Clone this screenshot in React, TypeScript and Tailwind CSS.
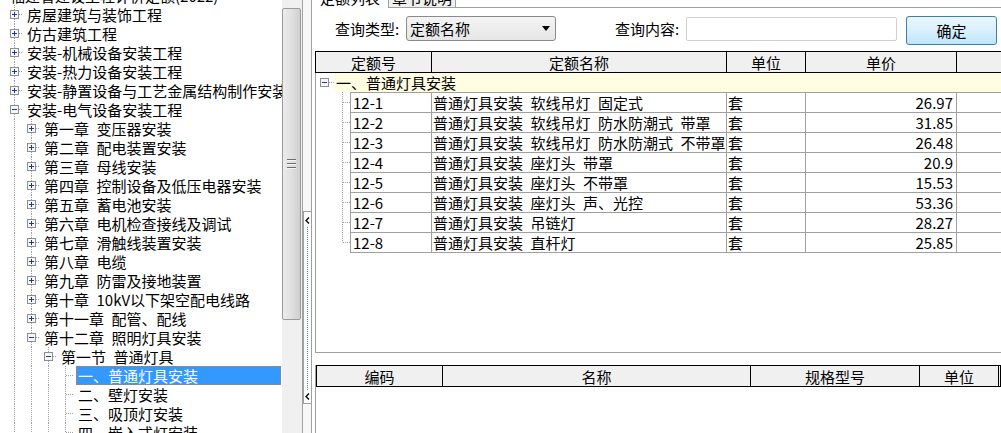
import React from "react";

// Tree node of the quota catalogue on the left
interface TreeNode {
  level: number;
  text: string;
  box?: "plus" | "minus";
  selected?: boolean;
}

interface QuotaRow {
  code: string;
  name: string;
  unit: string;
  price: string;
}

const SP = "\u2002";

const treeNodes: TreeNode[] = [
  { level: -1, text: "福建省建设工程计价定额(2022)", box: "minus" },
  { level: 0, text: "房屋建筑与装饰工程", box: "plus" },
  { level: 0, text: "仿古建筑工程", box: "plus" },
  { level: 0, text: "安装-机械设备安装工程", box: "plus" },
  { level: 0, text: "安装-热力设备安装工程", box: "plus" },
  { level: 0, text: "安装-静置设备与工艺金属结构制作安装工程", box: "plus" },
  { level: 0, text: "安装-电气设备安装工程", box: "minus" },
  { level: 1, text: `第一章${SP}变压器安装`, box: "plus" },
  { level: 1, text: `第二章${SP}配电装置安装`, box: "plus" },
  { level: 1, text: `第三章${SP}母线安装`, box: "plus" },
  { level: 1, text: `第四章${SP}控制设备及低压电器安装`, box: "plus" },
  { level: 1, text: `第五章${SP}蓄电池安装`, box: "plus" },
  { level: 1, text: `第六章${SP}电机检查接线及调试`, box: "plus" },
  { level: 1, text: `第七章${SP}滑触线装置安装`, box: "plus" },
  { level: 1, text: `第八章${SP}电缆`, box: "plus" },
  { level: 1, text: `第九章${SP}防雷及接地装置`, box: "plus" },
  { level: 1, text: `第十章${SP}10kV以下架空配电线路`, box: "plus" },
  { level: 1, text: `第十一章${SP}配管、配线`, box: "plus" },
  { level: 1, text: `第十二章${SP}照明灯具安装`, box: "minus" },
  { level: 2, text: `第一节${SP}普通灯具`, box: "minus" },
  { level: 3, text: "一、普通灯具安装", selected: true },
  { level: 3, text: "二、壁灯安装" },
  { level: 3, text: "三、吸顶灯安装" },
  { level: 3, text: "四、嵌入式灯安装" },
];

const quotaRows: QuotaRow[] = [
  { code: "12-1", name: `普通灯具安装${SP}软线吊灯${SP}固定式`, unit: "套", price: "26.97" },
  { code: "12-2", name: `普通灯具安装${SP}软线吊灯${SP}防水防潮式${SP}带罩`, unit: "套", price: "31.85" },
  { code: "12-3", name: `普通灯具安装${SP}软线吊灯${SP}防水防潮式${SP}不带罩`, unit: "套", price: "26.48" },
  { code: "12-4", name: `普通灯具安装${SP}座灯头${SP}带罩`, unit: "套", price: "20.9" },
  { code: "12-5", name: `普通灯具安装${SP}座灯头${SP}不带罩`, unit: "套", price: "15.53" },
  { code: "12-6", name: `普通灯具安装${SP}座灯头${SP}声、光控`, unit: "套", price: "53.36" },
  { code: "12-7", name: `普通灯具安装${SP}吊链灯`, unit: "套", price: "28.27" },
  { code: "12-8", name: `普通灯具安装${SP}直杆灯`, unit: "套", price: "25.85" },
];

const DOT = "#a0a0a0";

// small +/- expander box, drawn centred on (cx, cy)
function ExpanderBox({ kind, cx, cy }: { kind: "plus" | "minus"; cx: number; cy: number }) {
  return (
    <g>
      <rect x={cx - 4} y={cy - 4} width="8" height="8" fill="#f6f6f6" stroke="#8e8f8f" />
      <line x1={cx - 2.5} y1={cy} x2={cx + 2.5} y2={cy} stroke="#1d3a8c" />
      {kind === "plus" && <line x1={cx} y1={cy - 2.5} x2={cx} y2={cy + 2.5} stroke="#1d3a8c" />}
    </g>
  );
}

// one 17px indent column of the tree with its dotted guide lines
function TreeGuide({ own, box, root }: { own?: boolean; box?: "plus" | "minus"; root?: boolean }) {
  return (
    <svg width="17" height="19" className="block shrink-0">
      {!root && <line x1="8.5" y1="0" x2="8.5" y2="19" stroke={DOT} strokeDasharray="1 1" />}
      {own && <line x1="9" y1="9.5" x2="17" y2="9.5" stroke={DOT} strokeDasharray="1 1" />}
      {box && <ExpanderBox kind={box} cx={8.5} cy={9.5} />}
    </svg>
  );
}

function TreeRow({ node }: { node: TreeNode }) {
  const guides = [];
  for (let l = 0; l < node.level; l++) guides.push(<TreeGuide key={l} />);
  const isRoot = node.level < 0;
  return (
    <div className={`flex h-[19px] items-center ${isRoot ? "-ml-[11px]" : "pl-[6px]"}`}>
      {guides}
      <TreeGuide own={!isRoot} box={node.box} root={isRoot} />
      {node.selected ? (
        <span className="ml-[2px] mr-[1px] flex h-[19px] flex-1 items-center whitespace-nowrap border border-dotted border-[#d4801e] bg-[#3399ff] px-[1px] text-white">
          {node.text}
        </span>
      ) : (
        <span className="ml-[2px] flex h-[19px] items-center whitespace-nowrap px-[2px]">{node.text}</span>
      )}
    </div>
  );
}

function Chevron() {
  return (
    <svg width="5" height="7" className="block shrink-0">
      <polyline points="4,0.5 1,3.5 4,6.5" fill="none" stroke="#000" strokeWidth="1.3" />
    </svg>
  );
}

function QuotaLine({ row, last }: { row: QuotaRow; last: boolean }) {
  const h = last ? 21 : 20;
  return (
    <div className={`flex ${last ? "h-[21px]" : "h-[20px]"}`}>
      <svg width="34" height={h} className="block shrink-0">
        <line x1="26.5" y1="0" x2="26.5" y2={last ? 10.5 : h} stroke={DOT} strokeDasharray="1 1" />
        <line x1="27" y1="10.5" x2="34" y2="10.5" stroke={DOT} strokeDasharray="1 1" />
      </svg>
      <div className={`flex flex-1 border-t border-[#a0a0a0] ${last ? "border-b" : ""}`}>
        <div className="flex w-[82px] shrink-0 items-center border-x border-[#a0a0a0] pl-[2px]">{row.code}</div>
        <div className="flex w-[295px] shrink-0 items-center overflow-hidden whitespace-nowrap border-r border-[#a0a0a0] pl-[1px]">
          {row.name}
        </div>
        <div className="flex w-[79px] shrink-0 items-center border-r border-[#a0a0a0] pl-[1px]">{row.unit}</div>
        <div className="flex w-[151px] shrink-0 items-center justify-end border-r border-[#a0a0a0] pr-[3px]">
          {row.price}
        </div>
        <div className="flex-1" />
      </div>
    </div>
  );
}

export default function App() {
  return (
    <div className="flex h-[433px] w-[1001px] overflow-hidden bg-white font-['Noto_Sans_CJK_SC','Noto_Sans',sans-serif] text-[15px] leading-none text-black">
      {/* left: catalogue tree with its scrollbar */}
      <div className="flex w-[303px] shrink-0 border-r border-[#a0a0a0]">
        <div className="w-[282px] shrink-0 overflow-hidden">
          <div className="-mt-[14px]">
            {treeNodes.map((n, i) => (
              <TreeRow key={i} node={n} />
            ))}
          </div>
        </div>
        <div className="w-[20px] shrink-0 bg-[#f0f0f0] pt-[8px]">
          <div className="flex h-[312px] w-[19px] flex-col items-center justify-center gap-[2px] rounded-[2px] border border-[#9a9a9a] bg-gradient-to-r from-[#ececec] via-[#e0e0e0] to-[#cfcfcf]">
            <div className="h-[2px] w-[9px] border-t border-b border-t-[#6e6e6e] border-b-[#f4f4f4]" />
            <div className="h-[2px] w-[9px] border-t border-b border-t-[#6e6e6e] border-b-[#f4f4f4]" />
            <div className="h-[2px] w-[9px] border-t border-b border-t-[#6e6e6e] border-b-[#f4f4f4]" />
          </div>
        </div>
      </div>

      {/* splitter */}
      <div className="w-[8px] shrink-0 bg-[#f7f7f7] pt-[211px]">
        <div className="flex h-[193px] flex-col items-center border-y border-l border-[#a0a0a0] bg-white pb-[3px] pt-[5px]">
          <Chevron />
          <div className="my-[3px] w-0 flex-1 border-l border-dotted border-[#3b8fe6]" />
          <Chevron />
        </div>
      </div>

      {/* right: quota list */}
      <div className="flex min-w-0 flex-1 flex-col border-l border-[#a0a0a0]">
        <div className="flex h-[8px] shrink-0 items-start overflow-hidden">
          <div className="-mt-[14px] flex h-[22px] w-[76px] shrink-0 items-center pl-[8px]">定额列表</div>
          <div className="-mt-[14px] flex h-[22px] w-[68px] shrink-0 items-center justify-center border border-[#a0a0a0] bg-[#f0f0f0]">
            章节说明
          </div>
          <div className="h-[8px] flex-1 border-b border-[#a0a0a0]" />
        </div>

        <div className="flex h-[43px] shrink-0 items-start pl-[23px]">
          <div className="mt-[8px] flex h-[25px] w-[68px] shrink-0 items-center whitespace-nowrap">查询类型:</div>
          <div className="ml-[3px] mt-[8px] flex h-[25px] w-[150px] shrink-0 items-center justify-between rounded-[3px] border border-[#8a8a8a] bg-gradient-to-b from-[#f4f4f4] to-[#e6e6e6] pl-[3px] pr-[5px]">
            <span>定额名称</span>
            <svg width="8" height="5" className="block">
              <polygon points="0,0 8,0 4,5" fill="#000" />
            </svg>
          </div>
          <div className="ml-[59px] mt-[8px] flex h-[25px] w-[68px] shrink-0 items-center whitespace-nowrap">查询内容:</div>
          <div className="ml-[3px] mt-[9px] h-[24px] w-[211px] shrink-0 rounded-[2px] border border-[#d0d0d0] bg-white" />
          <button className="ml-[9px] mt-[8px] flex h-[29px] w-[91px] shrink-0 items-center justify-center rounded-[3px] border border-[#3c7fb1] bg-gradient-to-b from-[#eaf6fd] via-[#d9f0fc] to-[#bee6fd] text-[15px]">
            确定
          </button>
        </div>

        {/* quota table */}
        <div className="ml-[3px] flex h-[302px] shrink-0 flex-col overflow-hidden">
          <div className="flex h-[22px] shrink-0 border-y border-l border-black bg-[#f0f0f0]">
            <div className="flex w-[116px] shrink-0 items-center justify-center border-r border-black">定额号</div>
            <div className="flex w-[295px] shrink-0 items-center justify-center border-r border-black">定额名称</div>
            <div className="flex w-[79px] shrink-0 items-center justify-center border-r border-black">单位</div>
            <div className="flex w-[151px] shrink-0 items-center justify-center border-r border-black">单价</div>
            <div className="flex-1" />
          </div>
          <div className="flex-1 border-b border-l border-[#a0a0a0]">
            <div className="flex h-[19px]">
              <svg width="18" height="19" className="block shrink-0">
                <line x1="13" y1="9.5" x2="18" y2="9.5" stroke={DOT} strokeDasharray="1 1" />
                <ExpanderBox kind="minus" cx={8.5} cy={9.5} />
              </svg>
              <div className="flex flex-1 items-center bg-[#fffde2] pl-[2px]">一、普通灯具安装</div>
            </div>
            {quotaRows.map((r, i) => (
              <QuotaLine key={r.code} row={r} last={i === quotaRows.length - 1} />
            ))}
          </div>
        </div>

        {/* material table */}
        <div className="ml-[3px] mt-[12px] flex flex-1 flex-col border-l border-[#a0a0a0]">
          <div className="flex h-[22px] shrink-0 border border-black bg-[#f0f0f0]">
            <div className="flex w-[126px] shrink-0 items-center justify-center border-r border-black">编码</div>
            <div className="flex w-[308px] shrink-0 items-center justify-center border-r border-black">名称</div>
            <div className="flex w-[169px] shrink-0 items-center justify-center border-r border-black">规格型号</div>
            <div className="flex w-[79px] shrink-0 items-center justify-center border-r border-black">单位</div>
            <div className="flex-1" />
          </div>
          <div className="flex-1 bg-white" />
        </div>
      </div>
    </div>
  );
}
